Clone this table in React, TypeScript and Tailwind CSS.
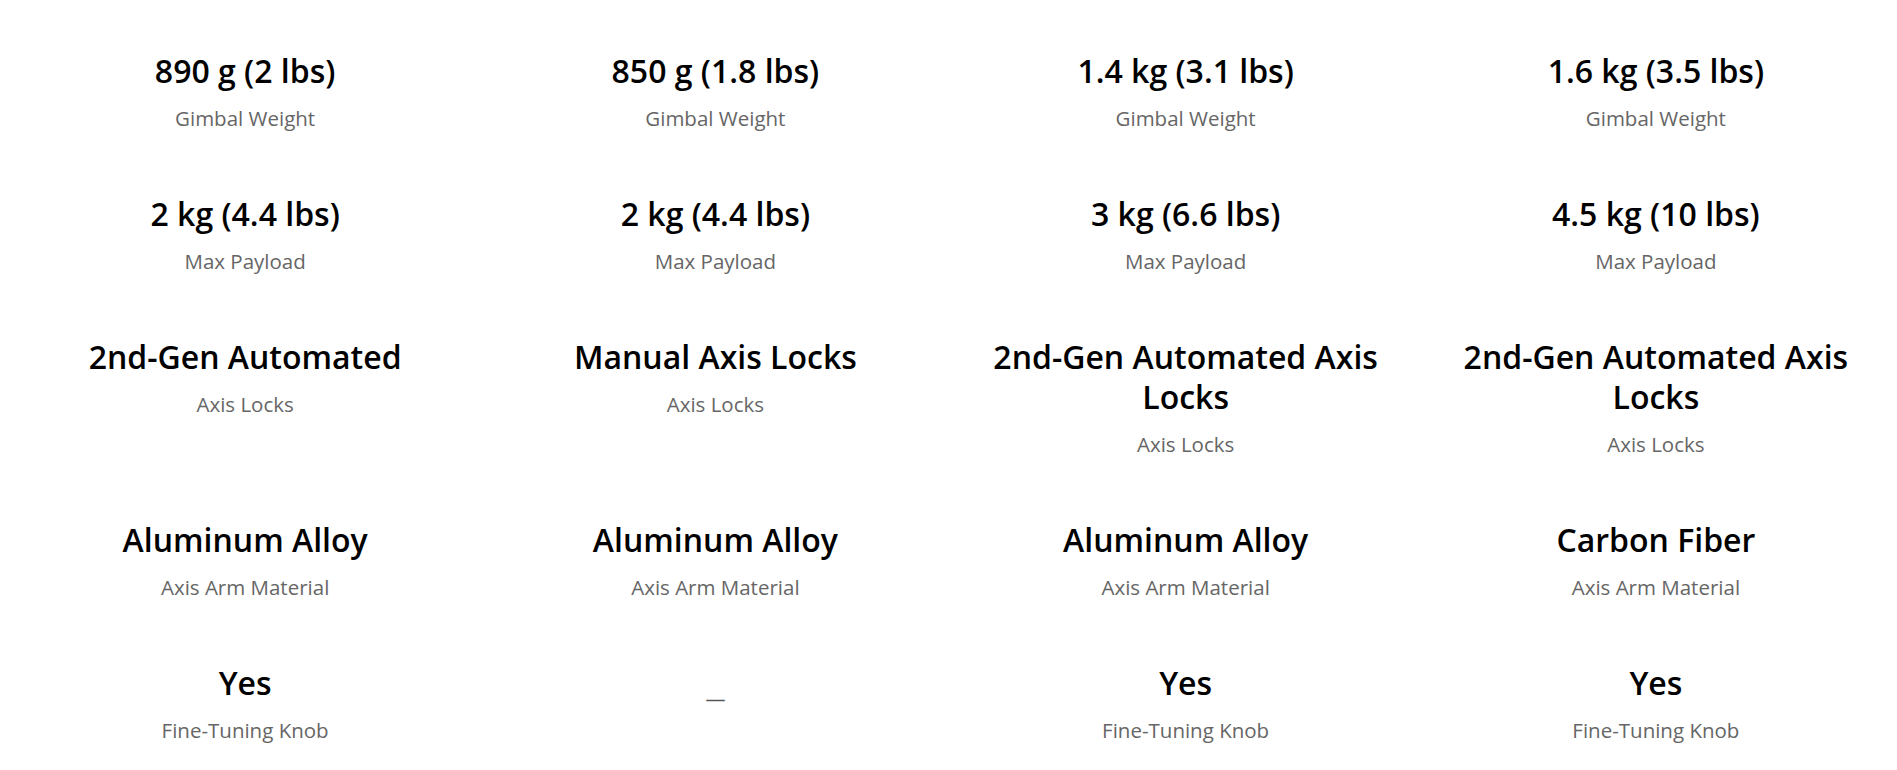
import React from 'react'

type Spec = { value?: string; label?: string }

const rows: Spec[][] = [
  [
    { value: '890 g (2 lbs)', label: 'Gimbal Weight' },
    { value: '850 g (1.8 lbs)', label: 'Gimbal Weight' },
    { value: '1.4 kg (3.1 lbs)', label: 'Gimbal Weight' },
    { value: '1.6 kg (3.5 lbs)', label: 'Gimbal Weight' },
  ],
  [
    { value: '2 kg (4.4 lbs)', label: 'Max Payload' },
    { value: '2 kg (4.4 lbs)', label: 'Max Payload' },
    { value: '3 kg (6.6 lbs)', label: 'Max Payload' },
    { value: '4.5 kg (10 lbs)', label: 'Max Payload' },
  ],
  [
    { value: '2nd-Gen Automated', label: 'Axis Locks' },
    { value: 'Manual Axis Locks', label: 'Axis Locks' },
    { value: '2nd-Gen Automated Axis Locks', label: 'Axis Locks' },
    { value: '2nd-Gen Automated Axis Locks', label: 'Axis Locks' },
  ],
  [
    { value: 'Aluminum Alloy', label: 'Axis Arm Material' },
    { value: 'Aluminum Alloy', label: 'Axis Arm Material' },
    { value: 'Aluminum Alloy', label: 'Axis Arm Material' },
    { value: 'Carbon Fiber', label: 'Axis Arm Material' },
  ],
  [
    { value: 'Yes', label: 'Fine-Tuning Knob' },
    {},
    { value: 'Yes', label: 'Fine-Tuning Knob' },
    { value: 'Yes', label: 'Fine-Tuning Knob' },
  ],
]

const SpecCell = ({ value, label }: Spec) => {
  if (!value) {
    return (
      <div className="flex flex-col items-center pt-[22px]">
        <span className="text-[20px] leading-7 text-[#555]">—</span>
      </div>
    )
  }
  return (
    <div className="flex flex-col items-center text-center px-[24px]">
      <h3 className="text-[32px] leading-10 font-semibold text-black">{value}</h3>
      <p className="mt-[13px] text-[20.5px] leading-7 text-[#666]">{label}</p>
    </div>
  )
}

export default function App() {
  return (
    <section
      className="min-h-screen bg-white pl-[10px] pr-[6px] pt-[51px] pb-10"
      style={{ fontFamily: '"Open Sans", "Noto Sans", sans-serif' }}
    >
      <div className="grid grid-cols-4 gap-y-[62px]">
        {rows.flat().map((s, i) => (
          <SpecCell key={i} {...s} />
        ))}
      </div>
    </section>
  )
}
